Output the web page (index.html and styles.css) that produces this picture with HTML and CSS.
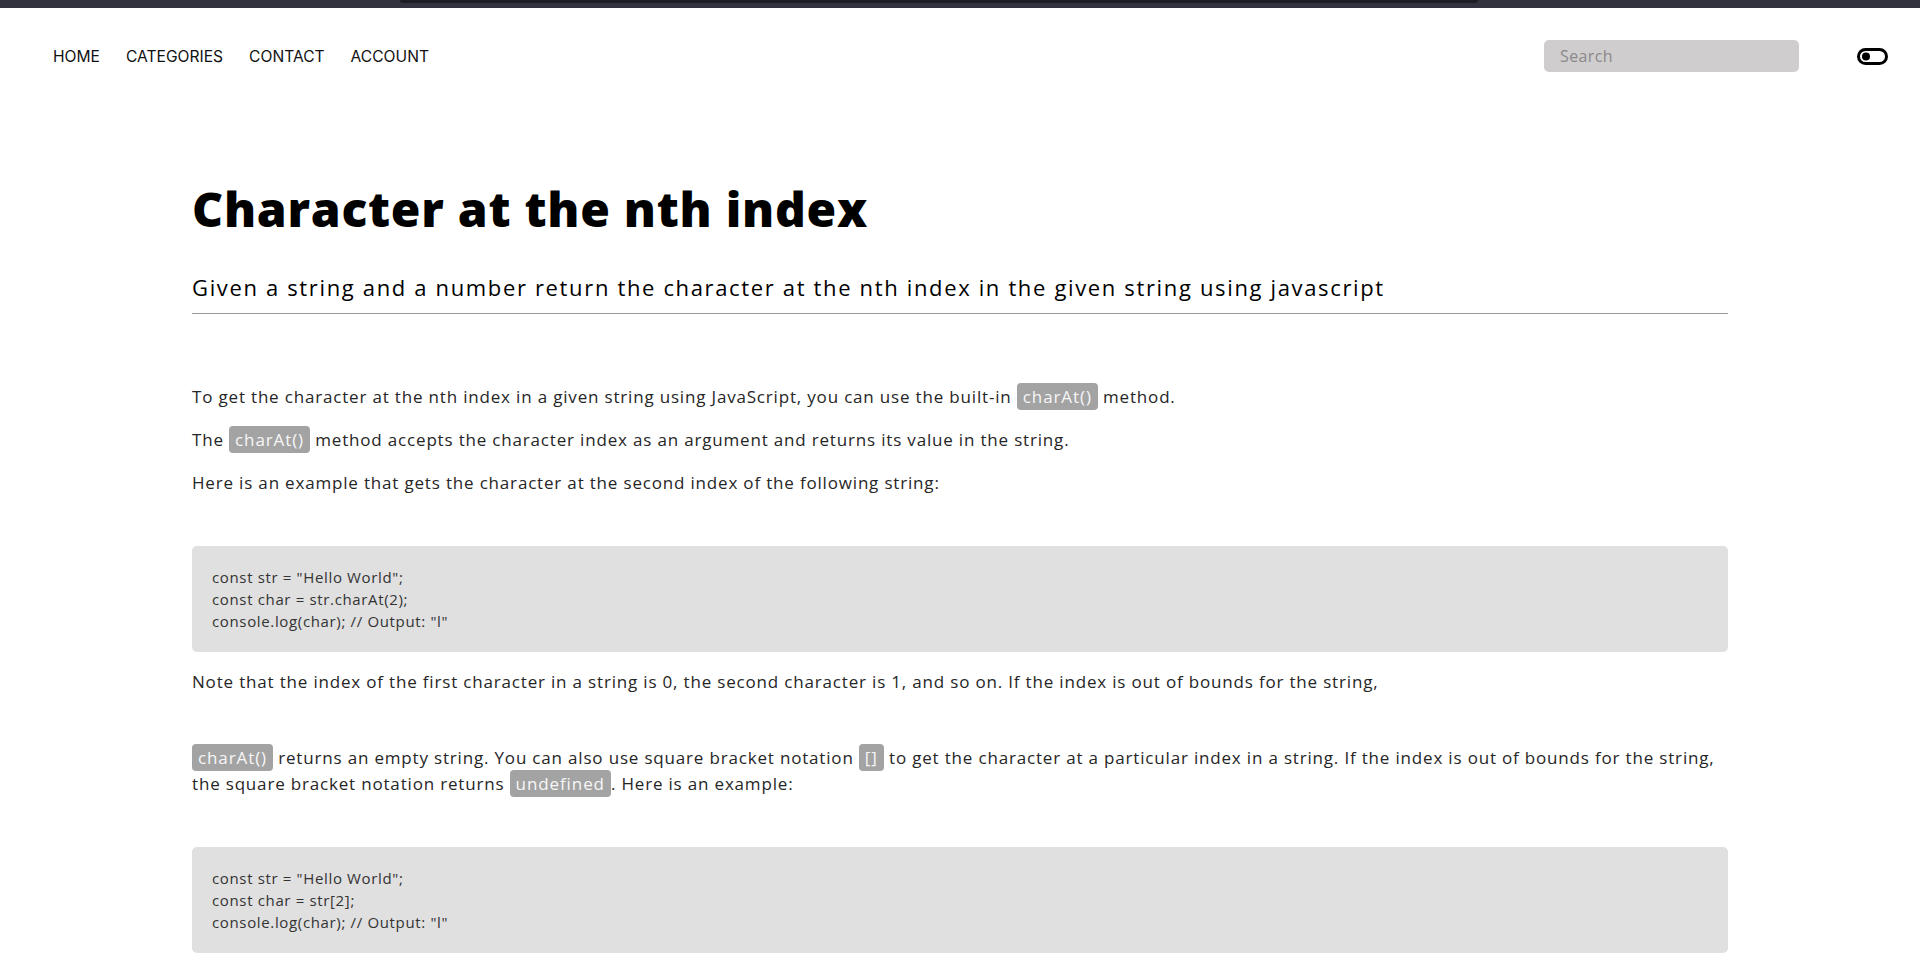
FILE: index.html
```html
<!DOCTYPE html>
<html lang="en">
<head>
<meta charset="utf-8">
<title>Character at the nth index</title>
<link rel="stylesheet" href="styles.css">
</head>
<body>
<div class="topbar"><div class="topbar-seg"></div></div>
<header class="header">
  <nav class="nav">
    <a class="nav-link" href="#">HOME</a>
    <a class="nav-link" href="#">CATEGORIES</a>
    <a class="nav-link" href="#">CONTACT</a>
    <a class="nav-link" href="#">ACCOUNT</a>
  </nav>
  <div class="header-right">
    <input class="search" type="text" placeholder="Search">
    <svg class="toggle" width="31" height="17" viewBox="0 0 31 17" aria-hidden="true">
      <rect x="1.5" y="1.5" width="28" height="14" rx="7" fill="none" stroke="#000" stroke-width="3"/>
      <circle cx="9" cy="8.5" r="4" fill="#000"/>
    </svg>
  </div>
</header>
<main class="content">
  <h1 class="title">Character at the nth index</h1>
  <h2 class="subtitle">Given a string and a number return the character at the nth index in the given string using javascript</h2>
  <p class="para first">To get the character at the nth index in a given string using JavaScript, you can use the built-in <code class="inline">charAt()</code> method.</p>
  <p class="para">The <code class="inline">charAt()</code> method accepts the character index as an argument and returns its value in the string.</p>
  <p class="para">Here is an example that gets the character at the second index of the following string:</p>
  <pre class="codeblock">const str = "Hello World";
const char = str.charAt(2);
console.log(char); // Output: "l"</pre>
  <p class="para note">Note that the index of the first character in a string is 0, the second character is 1, and so on. If the index is out of bounds for the string,</p>
  <p class="para spaced"><code class="inline">charAt()</code> returns an empty string. You can also use square bracket notation <code class="inline">[]</code> to get the character at a particular index in a string. If the index is out of bounds for the string, the square bracket notation returns <code class="inline">undefined</code>. Here is an example:</p>
  <pre class="codeblock">const str = "Hello World";
const char = str[2];
console.log(char); // Output: "l"</pre>
</main>
</body>
</html>
```

FILE: styles.css
```css
html, body {
  margin: 0;
  padding: 0;
  background: #ffffff;
}

body {
  font-family: "Open Sans", "Lato", sans-serif;
  color: #262626;
}

.topbar {
  height: 8px;
  background: #32333f;
  display: flex;
  padding-left: 400px;
}

.topbar-seg {
  width: 1078px;
  height: 3px;
  background: #1d1d25;
  border-radius: 0 0 3px 3px;
}

.header {
  height: 96px;
  display: flex;
  align-items: center;
  justify-content: space-between;
  padding: 0 32px 0 53px;
}

.nav {
  display: flex;
  align-items: center;
  gap: 26px;
}

.nav-link {
  font-family: "Inter", "Roboto", sans-serif;
  font-size: 15.6px;
  color: #111111;
  text-decoration: none;
}

.header-right {
  display: flex;
  align-items: center;
  gap: 58px;
}

.search {
  width: 255px;
  height: 32px;
  box-sizing: border-box;
  border: none;
  border-radius: 5px;
  background: #cfcdce;
  padding: 0 16px;
  font-family: "Open Sans", sans-serif;
  font-size: 16px;
  letter-spacing: 0.4px;
  color: #333;
  outline: none;
}

.search::placeholder {
  color: #8a898a;
}

.toggle {
  display: block;
}

.content {
  width: 1536px;
  margin: 0 auto;
}

.title {
  margin: 76px 0 0;
  font-family: "Open Sans", sans-serif;
  font-weight: 800;
  font-size: 48px;
  line-height: 58px;
  letter-spacing: 0.75px;
  color: #000000;
}

.subtitle {
  margin: 34px 0 0;
  padding-bottom: 11px;
  border-bottom: 1px solid #9a9a9a;
  font-family: "Open Sans", sans-serif;
  font-weight: 400;
  font-size: 22px;
  line-height: 30px;
  letter-spacing: 1.65px;
  color: #000000;
}

.para {
  margin: 17px 0;
  font-size: 17px;
  line-height: 26px;
  letter-spacing: 0.82px;
}

.para.first {
  margin-top: 70px;
}

.para.spaced {
  margin-top: 50px;
}

.inline {
  font-family: inherit;
  font-size: 17px;
  background: #a3a3a3;
  color: #f7f7f7;
  padding: 2px 6px;
  border-radius: 4px;
  letter-spacing: 0.9px;
}

.codeblock {
  margin: 50px 0 16px;
  padding: 20px;
  background: #e0e0e0;
  border-radius: 5px;
  font-family: "Open Sans", sans-serif;
  font-size: 15px;
  line-height: 22px;
  color: #333333;
  white-space: pre;
  letter-spacing: 0.65px;
}
```
